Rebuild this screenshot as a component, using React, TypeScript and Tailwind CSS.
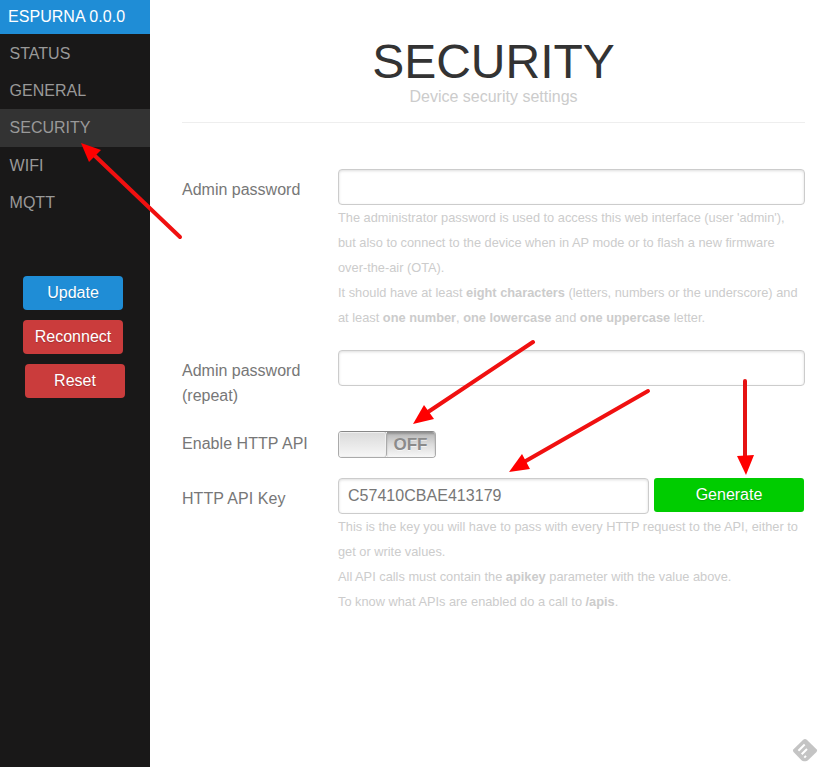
import type { ReactNode } from "react";

const menu = ["STATUS", "GENERAL", "SECURITY", "WIFI", "MQTT"];

const field =
  "block h-9 rounded-[4px] border border-[#ccc] bg-white px-[9px] text-base text-[#777] shadow-[inset_0_1px_3px_#ddd] outline-none";

function Row({ label, labelClass, className, children }: { label: ReactNode; labelClass: string; className: string; children: ReactNode }) {
  return (
    <div className={`flex ${className}`}>
      <label className={`w-[156px] shrink-0 leading-[25px] ${labelClass}`}>{label}</label>
      <div className="w-[467px]">{children}</div>
    </div>
  );
}

function Hint({ children }: { children: ReactNode }) {
  return <div className="whitespace-nowrap text-[12.8px] leading-[25px] text-[#ccc]">{children}</div>;
}

function Arrow({ x1, y1, x2, y2, tip, color = "#f01010" }: { x1: number; y1: number; x2: number; y2: number; tip: string; color?: string }) {
  return (
    <g>
      <line x1={x1} y1={y1} x2={x2} y2={y2} stroke={color} strokeWidth="4" strokeLinecap="round" />
      <polygon points={tip} fill="#ff0000" />
    </g>
  );
}

export default function App() {
  return (
    <div className="relative flex h-[767px] w-[822px] overflow-hidden bg-white font-['Liberation_Sans',Arial,sans-serif] text-base text-[#777]">
      <aside className="flex w-[150px] shrink-0 flex-col bg-[#191818]">
        <div className="h-[34px] bg-[#1f8dd6] pl-2 leading-[33px] tracking-[0.05px] text-white">ESPURNA 0.0.0</div>
        <nav className="flex flex-col pt-px">
          {menu.map((m) => (
            <a
              key={m}
              className={`pl-[9.6px] leading-[37px] text-[#999] ${m === "SECURITY" ? "h-[38px] bg-[#333]" : "h-[37px]"}`}
            >
              {m}
            </a>
          ))}
        </nav>
        <div className="mt-[55px] flex flex-col gap-[10px] pl-[23px] text-center leading-[33px] text-white">
          <button className="flex h-[34px] w-[100px] justify-center rounded-[4px] bg-[#1f8dd6] [text-shadow:0_1px_1px_rgba(0,0,0,0.2)]">Update</button>
          <button className="flex h-[34px] w-[100px] justify-center rounded-[4px] bg-[#ca3c3c] [text-shadow:0_1px_1px_rgba(0,0,0,0.2)]">Reconnect</button>
          <button className="ml-[2px] flex h-[34px] w-[100px] justify-center rounded-[4px] bg-[#ca3c3c] [text-shadow:0_1px_1px_rgba(0,0,0,0.2)]">Reset</button>
        </div>
      </aside>

      <main className="flex flex-col px-8">
        <header className="h-[123px] w-[623px] border-b border-[#eee] pt-[38px] text-center">
          <h1 className="text-[48px] leading-[48px] text-[#333]">SECURITY</h1>
          <h2 className="leading-[22px] text-[#ccc]">Device security settings</h2>
        </header>

        <Row label="Admin password" labelClass="pt-2" className="mt-[46px]">
          <input className={`${field} w-full`} type="password" />
          <Hint>
            The administrator password is used to access this web interface (user 'admin'),<br />
            but also to connect to the device when in AP mode or to flash a new firmware<br />
            over-the-air (OTA).<br />
            It should have at least <b>eight characters</b> (letters, numbers or the underscore) and<br />
            at least <b>one number</b>, <b>one lowercase</b> and <b>one uppercase</b> letter.
          </Hint>
        </Row>

        <Row label={<>Admin password<br />(repeat)</>} labelClass="pt-2" className="mt-5 h-[81px]">
          <input className={`${field} w-full`} type="password" />
        </Row>

        <Row label="Enable HTTP API" labelClass="tracking-[0.05px]" className="h-[47px]">
          <div className="flex h-[27px] w-[98px] overflow-hidden rounded-[4px] border border-[#aaa] border-t-[#888]">
            <span className="w-[48px] rounded-r-[3px] border-r border-[#aaa] bg-linear-to-b from-[#dadada] to-[#f7f7f7] shadow-[inset_0_0_0_1px_#f0f0f0]" />
            <span className="flex-1 bg-linear-to-b from-[#b5b5b5] via-[#dcdcdc] to-[#f7f7f7] pr-px text-center text-[17px] font-bold leading-[25px] text-[#8b8b8b] shadow-[inset_0_2px_2px_rgba(0,0,0,0.2)] [text-shadow:0_1px_0_rgba(255,255,255,0.6)]">
              OFF
            </span>
          </div>
        </Row>

        <Row label="HTTP API Key" labelClass="pt-2 tracking-[0.05px]" className="">
          <div className="flex gap-[5px]">
            <input className={`${field} w-[311px] tracking-[0.03px]`} defaultValue="C57410CBAE413179" />
            <button className="flex h-[34px] w-[150px] justify-center rounded-[3px] bg-[#00cc00] leading-[33px] text-white [text-shadow:0_1px_1px_rgba(0,0,0,0.2)]">Generate</button>
          </div>
          <Hint>
            This is the key you will have to pass with every HTTP request to the API, either to<br />
            get or write values.<br />
            All API calls must contain the <b>apikey</b> parameter with the value above.<br />
            To know what APIs are enabled do a call to <b>/apis</b>.
          </Hint>
        </Row>
      </main>

      <svg className="pointer-events-none absolute inset-0" width="822" height="767" viewBox="0 0 822 767">
        <Arrow x1={180} y1={237} x2={94} y2={155} tip="81,143 101,150 89,162" />
        <Arrow x1={533} y1={342} x2={428} y2={412} tip="413,424 424,405 434,419" />
        <Arrow x1={648} y1={391} x2={524} y2={462} tip="509,472 522,454 530,469" />
        <Arrow x1={745} y1={381} x2={745} y2={457} tip="746,475 737,456 754,455" color="#e51212" />
        <g>
          <path d="M803.2 739.8 Q805 738.2 806.8 739.8 L816.5 749.3 Q817.8 750.6 816.5 752 L808 760.3 Q807 761.2 805.5 761.2 H804 Q802.5 761.2 801.5 760.3 L793.5 752 Q792.2 750.6 793.5 749.3 Z" fill="#c4c4c4" />
          <path d="M798.4 750.8 L804.7 744.5 M801.7 754.2 L807 749 M804.3 757.6 L806 755.9" stroke="#fff" strokeWidth="2" fill="none" />
        </g>
      </svg>
    </div>
  );
}
